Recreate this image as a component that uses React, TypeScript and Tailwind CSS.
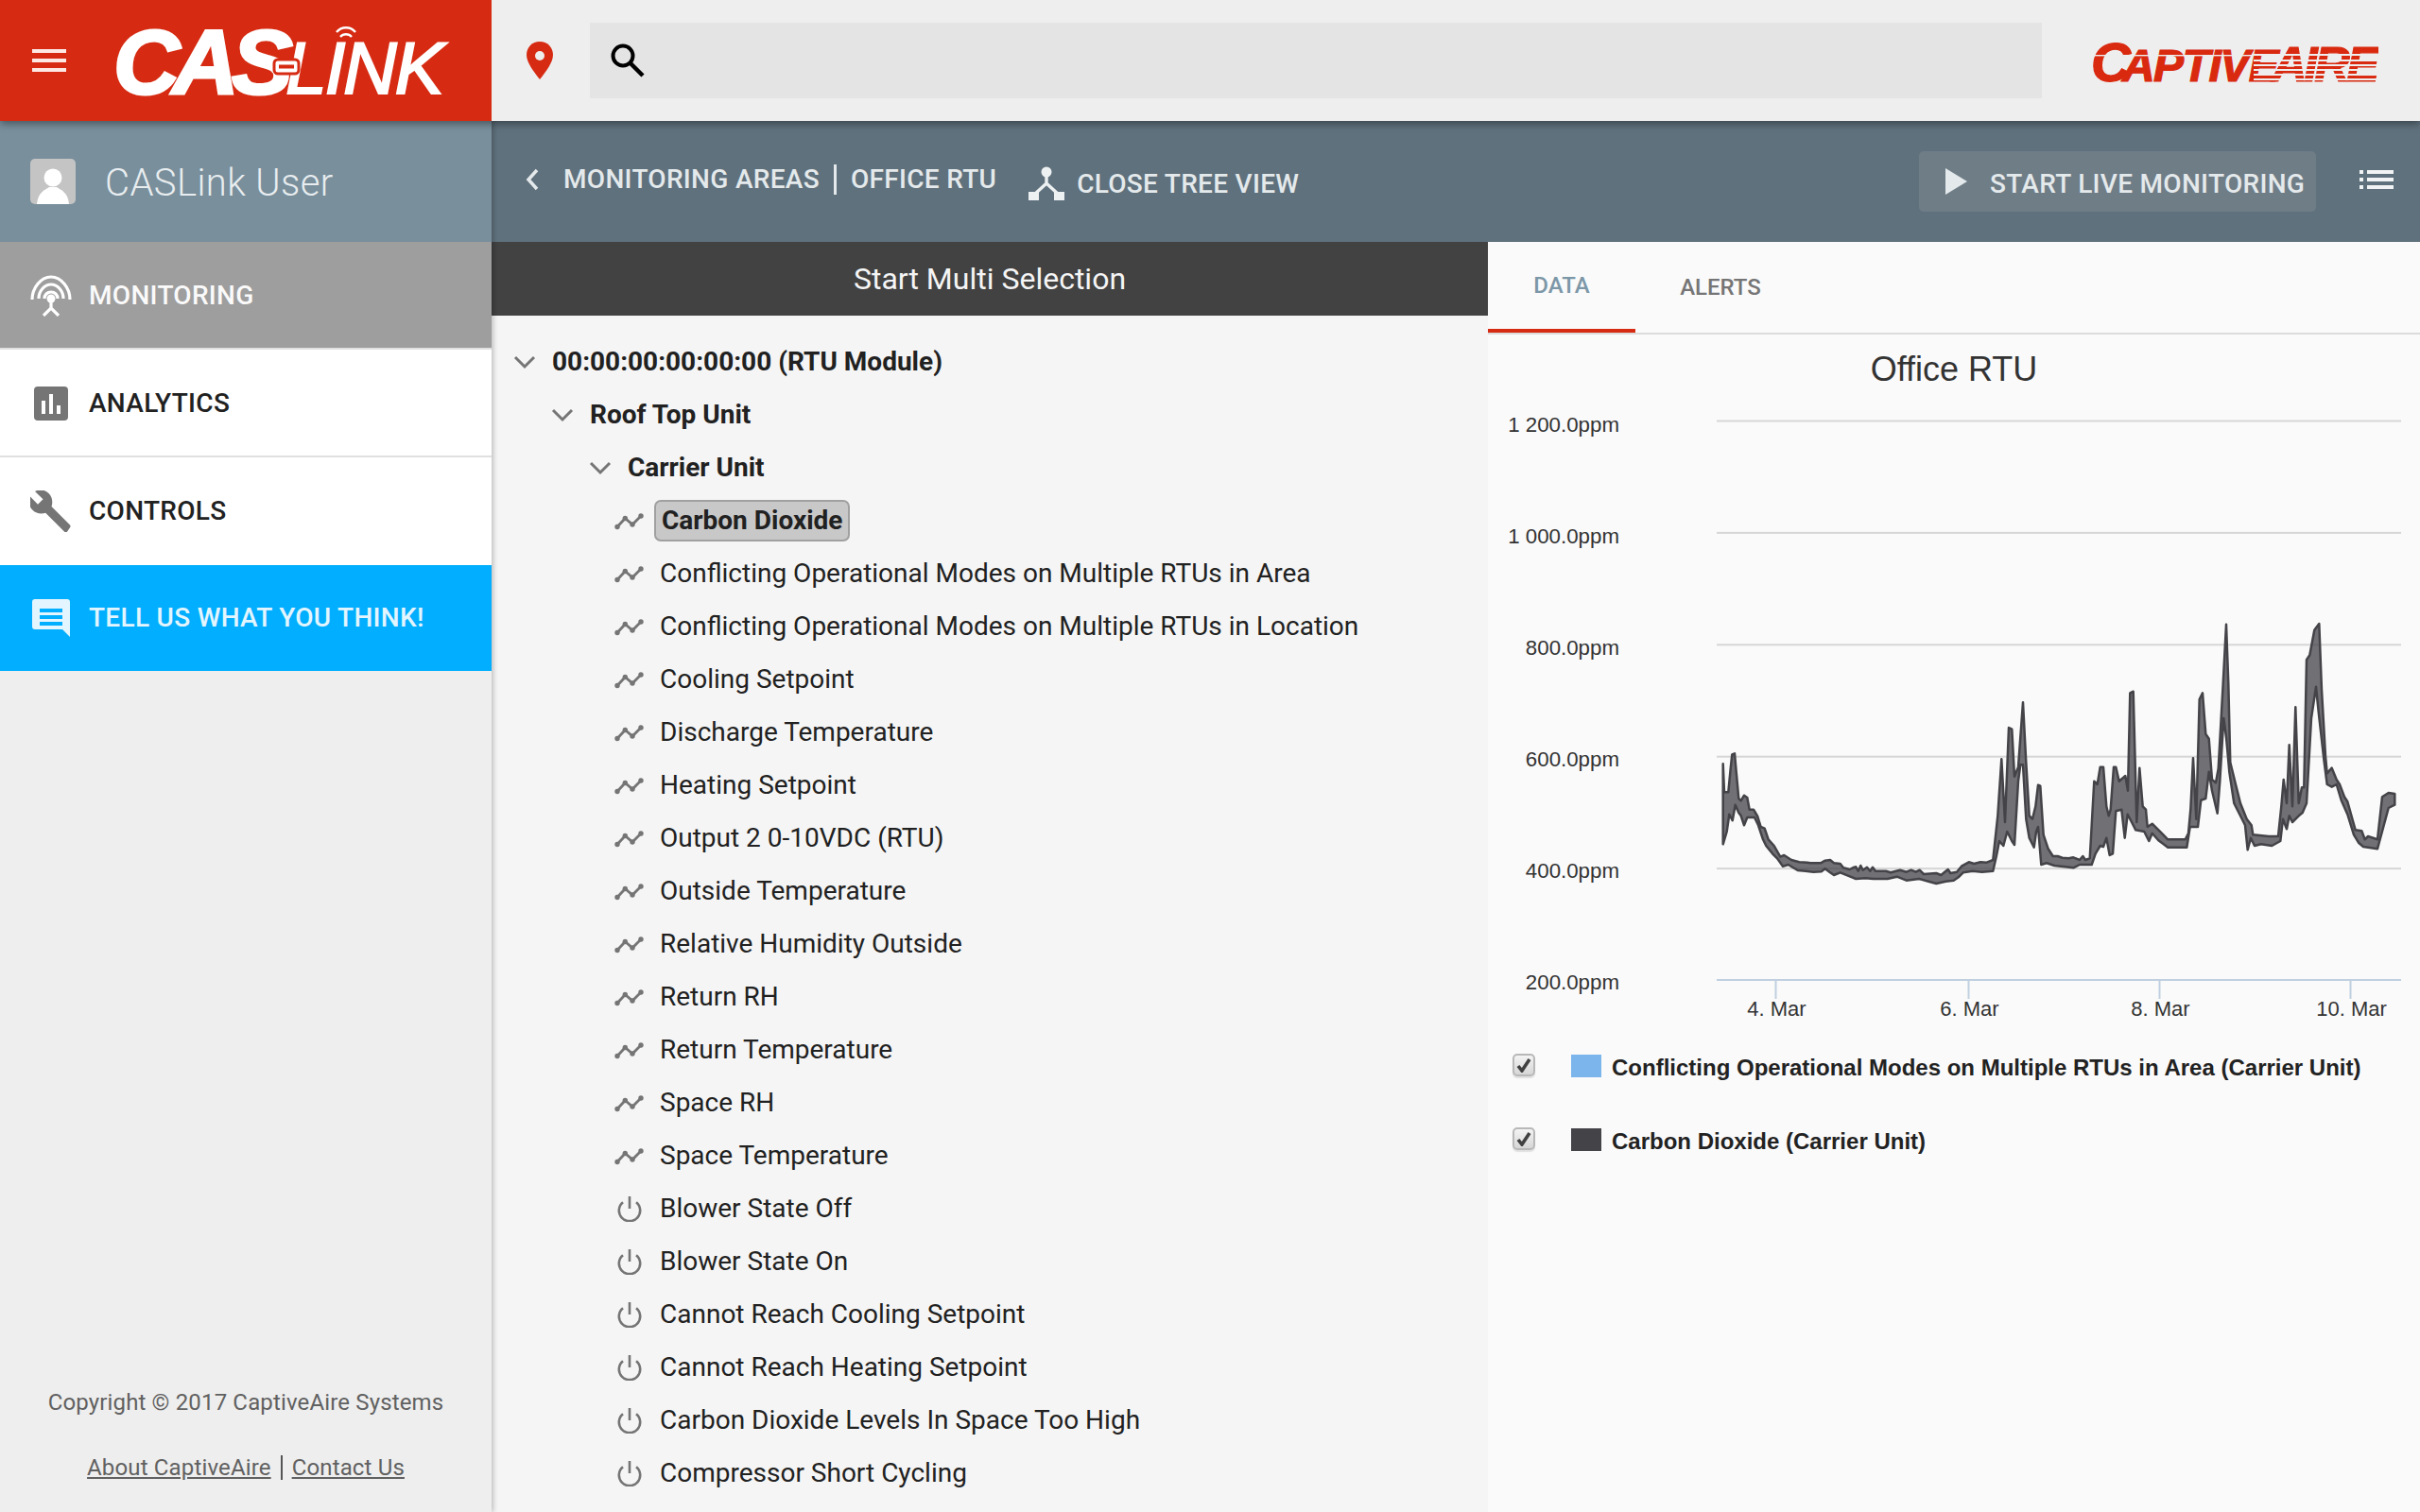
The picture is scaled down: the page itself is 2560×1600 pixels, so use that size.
import React from "react";

const roboto = "font-['Roboto',sans-serif]";

const U8: [number, number][] = [[68,205],[72,295],[85,295],[92,220],[97,175],[105,172],[110,230],[118,315],[125,322],[135,305],[145,312],[152,350],[165,350],[178,372],[188,405],[200,410],[212,445],[230,465],[250,500],[262,495],[285,510],[310,517],[335,518],[345,520],[378,520],[392,512],[408,510],[420,520],[440,522],[450,535],[470,540],[480,535],[490,532],[497,545],[505,528],[512,542],[525,533],[535,545],[543,533],[552,545],[585,545],[600,550],[630,542],[650,548],[665,542],[680,548],[692,542],[705,555],[745,552],[760,558],[782,540],[790,552],[810,548],[825,530],[848,517],[865,522],[885,517],[905,518],[925,510],[940,370],[952,190],[963,390],[975,90],[985,95],[993,245],[1005,215],[1020,10],[1030,200],[1040,370],[1050,380],[1060,340],[1068,272],[1075,275],[1085,430],[1100,475],[1115,498],[1130,498],[1145,503],[1165,505],[1180,502],[1200,510]];
const L8: [number, number][] = [[68,460],[80,420],[88,365],[98,385],[107,335],[118,360],[125,370],[135,400],[145,375],[168,375],[180,400],[195,445],[205,465],[225,490],[240,505],[258,530],[275,525],[305,543],[330,545],[355,548],[380,547],[392,538],[408,550],[420,558],[440,550],[470,562],[490,570],[520,568],[545,570],[590,570],[620,563],[650,575],[690,570],[720,578],[745,585],[775,578],[800,575],[815,565],[830,550],[860,545],[890,548],[925,545],[935,500],[945,450],[958,465],[970,420],[985,450],[993,462],[1005,260],[1012,208],[1020,208],[1030,380],[1040,440],[1055,470],[1062,420],[1068,405],[1078,525],[1095,520],[1120,528],[1140,530],[1155,532],[1180,535],[1200,525]];
const U9: [number, number][] = [[10,798],[18,810],[32,805],[38,700],[46,560],[56,570],[65,515],[75,515],[85,640],[92,670],[98,650],[108,515],[115,515],[125,560],[145,543],[153,590],[160,280],[170,275],[181,690],[190,518],[200,640],[210,650],[215,705],[230,695],[260,725],[280,745],[335,745],[345,725],[352,650],[360,487],[370,680],[380,300],[390,280],[400,410],[410,425],[420,555],[432,565],[440,520],[455,250],[465,62],[472,250],[478,500],[495,570],[510,630],[530,680],[545,700],[550,730],[600,735],[630,735],[640,640],[647,555],[657,630],[665,445],[675,640],[685,325],[695,630],[705,580],[712,580],[720,175],[730,160],[745,80],[760,60],[768,270],[780,480],[785,535],[800,518],[815,555],[825,570],[840,610],[850,625],[875,715],[895,718],[905,745],[915,735],[945,745],[960,610],[980,597],[1000,600]];
const L9: [number, number][] = [[38,825],[50,790],[65,765],[75,768],[85,740],[95,795],[105,790],[115,655],[133,650],[143,740],[152,665],[165,690],[178,715],[205,720],[220,750],[230,725],[250,748],[280,770],[340,770],[350,705],[375,705],[385,620],[400,615],[410,530],[420,590],[437,662],[445,560],[457,360],[465,420],[475,530],[490,630],[510,670],[525,700],[533,778],[543,740],[555,765],[575,760],[610,765],[637,750],[645,680],[657,712],[665,670],[675,690],[695,670],[707,660],[720,630],[735,360],[750,260],[758,340],[775,490],[785,570],[800,578],[815,570],[830,620],[850,665],[870,730],[885,755],[900,768],[945,775],[965,700],[980,645],[1000,635]];

// chart svg origin is (1574, 354) in page space
const OX = 1574;
const OY = 354;
const m8 = (p: [number, number]) => `${(1800 + p[0] / 3 - OX).toFixed(1)},${(740 + p[1] / 3 - OY).toFixed(1)}`;
const m9 = (p: [number, number]) => `${(2200 + p[0] / 3 - OX).toFixed(1)},${(640 + p[1] / 3 - OY).toFixed(1)}`;
const upper = [...U8.map(m8), ...U9.map(m9)];
const lower = [...L8.map(m8), ...L9.map(m9)];
const area = [...upper, ...[...lower].reverse()].join(" ");

const trendItems = [
  "Conflicting Operational Modes on Multiple RTUs in Area",
  "Conflicting Operational Modes on Multiple RTUs in Location",
  "Cooling Setpoint",
  "Discharge Temperature",
  "Heating Setpoint",
  "Output 2 0-10VDC (RTU)",
  "Outside Temperature",
  "Relative Humidity Outside",
  "Return RH",
  "Return Temperature",
  "Space RH",
  "Space Temperature",
];
const powerItems = [
  "Blower State Off",
  "Blower State On",
  "Cannot Reach Cooling Setpoint",
  "Cannot Reach Heating Setpoint",
  "Carbon Dioxide Levels In Space Too High",
  "Compressor Short Cycling",
];

function Chevron() {
  return (
    <svg width="24" height="16" viewBox="0 0 24 16" className="shrink-0">
      <path d="M2 3l10 10L22 3" fill="none" stroke="#757575" strokeWidth="3" />
    </svg>
  );
}
function TrendIcon() {
  return (
    <svg width="32" height="20" viewBox="0 0 32 20" className="shrink-0 mt-[2px]">
      <path d="M3 15.500l8.300-9L19 13l9-9" fill="none" stroke="#757575" strokeWidth="2.800" />
      <circle cx="3" cy="15.500" r="2.700" fill="#757575" />
      <circle cx="11.300" cy="6.500" r="2.700" fill="#757575" />
      <circle cx="19" cy="13" r="2.700" fill="#757575" />
      <circle cx="28" cy="4" r="2.700" fill="#757575" />
    </svg>
  );
}
function PowerIcon() {
  return (
    <svg width="32" height="28" viewBox="0 0 32 28" className="shrink-0">
      <path d="M9 7.200a11.200 11.200 0 1 0 14 0" fill="none" stroke="#757575" strokeWidth="2.600" />
      <path d="M16 1v13" fill="none" stroke="#757575" strokeWidth="2.600" />
    </svg>
  );
}
function Branch({ indent, label }: { indent: string; label: string }) {
  return (
    <div className={`flex h-[56px] items-center ${indent}`}>
      <Chevron />
      <span className="ml-[17px] text-[28px] font-bold text-[#212121]">{label}</span>
    </div>
  );
}
function Leaf({ icon, children }: { icon: React.ReactNode; children: React.ReactNode }) {
  return (
    <div className="flex h-[56px] items-center pl-[130px]">
      <span className="flex w-[48px] shrink-0 items-center">{icon}</span>
      {children}
    </div>
  );
}

function CasLinkLogo() {
  return (
    <svg width="360" height="100" viewBox="0 0 360 100" className="ml-[34px] shrink-0">
      <text x="0" y="86" fill="#fff" stroke="#fff" fontFamily="'Liberation Sans', sans-serif" fontStyle="italic">
        <tspan fontSize="97" fontWeight="700" letterSpacing="-7.500" strokeWidth="3">CAS</tspan>
        <tspan fontSize="78" fontWeight="400" letterSpacing="-2" strokeWidth="2.200">LINK</tspan>
      </text>
      <rect x="170" y="50" width="26" height="15" rx="4" fill="#fff" stroke="#d62b12" strokeWidth="3" />
      <rect x="175" y="55.500" width="16" height="4" fill="#d62b12" />
      <path d="M236 21a13 13 0 0 1 20 0" fill="none" stroke="#fff" strokeWidth="2.400" />
      <path d="M240 26a8 8 0 0 1 12 0" fill="none" stroke="#fff" strokeWidth="2.400" />
    </svg>
  );
}

function CaptiveLogo() {
  const stripes = [17, 23, 28, 33, 38, 43];
  return (
    <svg width="304" height="50" viewBox="0 0 304 50" className="shrink-0">
      <text x="0" y="46" fill="#d9290f" stroke="#d9290f" strokeWidth="1.200" fontFamily="'Liberation Sans', sans-serif" fontStyle="italic" fontWeight="700">
        <tspan fontSize="58" letterSpacing="-9">C</tspan>
        <tspan fontSize="48" letterSpacing="-1.500">APTIVE</tspan>
        <tspan fontSize="52" letterSpacing="-3.500" dx="-6">AIRE</tspan>
      </text>
      <rect x="0" y="18" width="170" height="1.400" fill="#eee" />
      {stripes.map((y) => (
        <rect key={y} x="172" y={y} width="132" height="2" fill="#eee" />
      ))}
    </svg>
  );
}

function NavRow({ icon, label, cls }: { icon: React.ReactNode; label: string; cls: string }) {
  return (
    <div className={`flex items-center pl-[32px] text-[28px] font-medium tracking-[0.3px] ${cls}`}>
      <span className="flex w-[62px] shrink-0 items-center">{icon}</span>
      <span>{label}</span>
    </div>
  );
}

function Legend({ color, label }: { color: string; label: string }) {
  return (
    <div className="flex h-[78px] items-center pl-[26px]">
      <span className="mb-[6px] flex h-[24px] w-[24px] shrink-0 items-center justify-center rounded-[5px] border-2 border-[#b8b8b8] bg-gradient-to-b from-[#f4f4f4] to-[#d6d6d6] shadow-[0_2px_1px_#e0e0e0]">
        <svg width="16" height="16" viewBox="0 0 16 16"><path d="M2 9l4 5L14 2" fill="none" stroke="#404040" strokeWidth="3.600" /></svg>
      </span>
      <span className="mb-[4px] ml-[38px] h-[24px] w-[32px] shrink-0" style={{ backgroundColor: color }} />
      <span className="ml-[11px] font-['Liberation_Sans',sans-serif] text-[24px] font-bold text-[#222]">{label}</span>
    </div>
  );
}

export default function App() {
  const yLabels = ["1 200.0ppm", "1 000.0ppm", "800.0ppm", "600.0ppm", "400.0ppm", "200.0ppm"];
  const ticks: [number, string][] = [[1878.5, "4. Mar"], [2082.5, "6. Mar"], [2284.5, "8. Mar"], [2486.5, "10. Mar"]];
  return (
    <div className={`flex h-[1600px] w-[2560px] flex-col overflow-hidden bg-[#eeeeee] ${roboto}`}>
      <header className="relative z-20 flex h-[128px] shrink-0 items-center bg-[#eeeeee] shadow-[0_3px_8px_rgba(0,0,0,0.4)]">
        <div className="flex h-full w-[520px] shrink-0 items-center bg-[#d62b12] pl-[34px]">
          <svg width="36" height="24" viewBox="0 0 36 24" className="shrink-0">
            <path d="M0 0h36v4H0zM0 10h36v4H0zM0 20h36v4H0z" fill="#fde8e4" />
          </svg>
          <div className="ml-[16px] mt-[-2px]"><CasLinkLogo /></div>
        </div>
        <svg width="28" height="40" viewBox="0 0 28 40" className="ml-[37px] mt-[-1px] shrink-0">
          <path d="M14 0C6 0 0 6.200 0 14c0 8 7 17 14 26 7-9 14-18 14-26C28 6.200 22 0 14 0z" fill="#d62b12" />
          <circle cx="14" cy="15" r="5" fill="#eee" />
        </svg>
        <div className="ml-[39px] flex h-[80px] w-[1536px] shrink-0 items-center bg-[#e4e4e4] pl-[22px]">
          <svg width="36" height="36" viewBox="0 0 36 36">
            <circle cx="13" cy="13" r="10.500" fill="none" stroke="#000" strokeWidth="4" />
            <path d="M21 21l13 13" stroke="#000" strokeWidth="4.500" fill="none" />
          </svg>
        </div>
        <div className="ml-[52px] mt-[2px]"><CaptiveLogo /></div>
      </header>

      <div className="flex min-h-0 flex-1">
        <aside className="relative z-10 flex w-[520px] shrink-0 flex-col bg-[#eeeeee] shadow-[2px_0_5px_rgba(0,0,0,0.22)]">
          <div className="flex h-[128px] items-center bg-[#798f9c] pl-[32px]">
            <div className="flex h-[48px] w-[48px] items-end justify-center overflow-hidden rounded-[5px] bg-[#c4c4c4]">
              <svg width="40" height="42" viewBox="0 0 40 42">
                <circle cx="20" cy="14" r="9.500" fill="#fff" />
                <path d="M3 42c1-12 8-15 13-18h8c5 3 12 6 13 18z" fill="#fff" />
              </svg>
            </div>
            <span className="ml-[31px] mt-[4px] text-[40px] font-light leading-none tracking-[0.4px] text-[#e8edef]">CASLink User</span>
          </div>
          <NavRow
            cls="h-[114px] pt-[2px] border-b-2 border-[#e0e0e0] bg-[#9e9e9e] text-[#fafafa]"
            label="MONITORING"
            icon={
              <svg width="44" height="44" viewBox="0 0 44 44">
                <g fill="none" stroke="#fff" strokeWidth="3.200">
                  <path d="M2 26C2 14 11 2 22 2s20 12 20 24" />
                  <path d="M9 25c0-8 6-15 13-15s13 7 13 15" />
                  <path d="M15 25c0-4 3-7 7-7s7 3 7 7" />
                  <path d="M22 28v7M14 43l8-8 8 8" />
                </g>
                <circle cx="22" cy="25" r="4.500" fill="#fff" />
              </svg>
            }
          />
          <NavRow
            cls="h-[114px] pt-[2px] border-b-2 border-[#e0e0e0] bg-white text-[#212121]"
            label="ANALYTICS"
            icon={
              <svg width="36" height="36" viewBox="0 0 36 36" className="ml-[4px]">
                <rect width="36" height="36" rx="4" fill="#757575" />
                <path d="M8 15h4v14H8zM16 8h4v21h-4zM24 20h4v9h-4z" fill="#fff" />
              </svg>
            }
          />
          <NavRow
            cls="h-[114px] bg-white text-[#212121]"
            label="CONTROLS"
            icon={
              <svg width="44" height="44" viewBox="0 0 44 44">
                <path d="M42 36.500 22.500 17c1.700-4.700.7-10.300-3-14C15.500-1 9.500-1.700 5 1l8.500 8.300-5.500 5.500L0 6.500c-2.300 4.500-1.500 10.500 2.500 14.300 3.700 3.700 9 4.700 13.700 3L36.500 44c.8.600 1.600.600 2.300 0l3.200-4.700c.7-.7.700-2 0-2.800z" fill="#757575" />
              </svg>
            }
          />
          <NavRow
            cls="h-[112px] bg-[#02aeff] text-[#e3f5fe]"
            label="TELL US WHAT YOU THINK!"
            icon={
              <svg width="40" height="40" viewBox="0 0 40 40" className="ml-[2px]">
                <path d="M3 0h34a3 3 0 0 1 3 3v37l-8-8H3a3 3 0 0 1-3-3V3a3 3 0 0 1 3-3z" fill="#e3f5fe" />
                <path d="M8 10h24v4H8zM8 17h24v4H8zM8 24h24v4H8z" fill="#02aeff" />
              </svg>
            }
          />
          <div className="mt-auto flex flex-col items-center pb-[29px] text-[24px] tracking-[0.15px] text-[#616161]">
            <span>Copyright © 2017 CaptiveAire Systems</span>
            <div className="mt-[33px] flex items-center">
              <span className="underline">About CaptiveAire</span>
              <span className="mx-[10px] h-[26px] w-[2px] bg-[#555]" />
              <span className="underline">Contact Us</span>
            </div>
          </div>
        </aside>

        <main className="flex min-w-0 flex-1 flex-col">
          <div className="flex h-[128px] shrink-0 items-center bg-[#5f717d] text-[#e4e9eb]">
            <svg width="14" height="24" viewBox="0 0 14 24" className="ml-[36px] mt-[-4px] shrink-0">
              <path d="M12 2 3 12l9 10" fill="none" stroke="#e4e9eb" strokeWidth="3.500" />
            </svg>
            <div className="ml-[26px] mt-[-5px] flex items-center text-[28px] font-medium tracking-[0.3px]">
              <span>MONITORING AREAS</span>
              <span className="mx-[15px] h-[32px] w-[3px] bg-[#e4e9eb]" />
              <span>OFFICE RTU</span>
            </div>
            <svg width="38" height="36" viewBox="0 0 38 36" className="ml-[34px] mt-[4px] shrink-0">
              <circle cx="19" cy="6" r="5.500" fill="#eef1f2" />
              <path d="M19 8v10M19 18 6 30M19 18l13 12" stroke="#eef1f2" strokeWidth="3.400" fill="none" />
              <path d="M0 27h11v9H0zM27 27h11v9H27z" fill="#eef1f2" />
            </svg>
            <span className="ml-[13px] mt-[5px] text-[28px] font-medium tracking-[0.3px]">CLOSE TREE VIEW</span>
            <div className="ml-auto flex h-[64px] w-[420px] items-center rounded-[5px] bg-[#6f7d87] pl-[27px]">
              <svg width="24" height="28" viewBox="0 0 24 28" className="shrink-0">
                <path d="M1 0l23 14L1 28z" fill="#e4e9eb" />
              </svg>
              <span className="ml-[24px] mt-[5px] text-[28px] font-medium tracking-[0.3px]">START LIVE MONITORING</span>
            </div>
            <svg width="36" height="20" viewBox="0 0 36 20" className="ml-[46px] mr-[28px] mt-[-4px] shrink-0">
              <path d="M0 0h4v4H0zM8 0h28v4H8zM0 8h4v4H0zM8 8h28v4H8zM0 16h4v4H0zM8 16h28v4H8z" fill="#f1f3f4" />
            </svg>
          </div>

          <div className="flex min-h-0 flex-1">
            <section className="flex w-[1054px] shrink-0 flex-col overflow-hidden bg-[#f5f5f5]">
              <div className="flex h-[78px] shrink-0 items-center justify-center bg-[#424242] text-[32px] text-[#f5f5f5]">
                Start Multi Selection
              </div>
              <div className="pt-[21px] text-[#212121]">
                <Branch indent="pl-[23px]" label="00:00:00:00:00:00 (RTU Module)" />
                <Branch indent="pl-[63px]" label="Roof Top Unit" />
                <Branch indent="pl-[103px]" label="Carrier Unit" />
                <Leaf icon={<TrendIcon />}>
                  <span className="ml-[-6px] flex h-[44px] items-center rounded-[7px] border-2 border-[#a0a0a0] bg-[#c8c8c8] px-[6px] text-[28px] font-bold">Carbon Dioxide</span>
                </Leaf>
                {trendItems.map((t) => (
                  <Leaf key={t} icon={<TrendIcon />}>
                    <span className="text-[28px]">{t}</span>
                  </Leaf>
                ))}
                {powerItems.map((t) => (
                  <Leaf key={t} icon={<PowerIcon />}>
                    <span className="text-[28px]">{t}</span>
                  </Leaf>
                ))}
              </div>
            </section>

            <section className="flex min-w-0 flex-1 flex-col bg-[#fafafa]">
              <div className="flex h-[98px] shrink-0 border-b-2 border-[#dcdcdc] text-[24px] font-medium">
                <div className="flex h-[96px] w-[156px] items-center justify-center border-b-4 border-[#d62b12] text-[#7c97a7]">DATA</div>
                <div className="flex h-[96px] w-[180px] items-center justify-center text-[#757575]">ALERTS</div>
              </div>
              <svg width="986" height="737" viewBox="0 0 986 737" className="shrink-0">
                <g fontFamily="'Liberation Sans', sans-serif">
                  <text x="493" y="49" textAnchor="middle" fontSize="36" fill="#333">Office RTU</text>
                  {yLabels.map((l, i) => (
                    <g key={l}>
                      <text x="139" y={102.5 + i * 118.1} textAnchor="end" fontSize="22.300" fill="#333">{l}</text>
                      {i < 5 && <rect x="242" y={90.5 + i * 118.4} width="724" height="2" fill="#d6d6d6" />}
                    </g>
                  ))}
                  <rect x="242" y="682" width="724" height="2" fill="#c0d0e0" />
                  {ticks.map(([x, l]) => (
                    <g key={l}>
                      <rect x={x - OX - 1} y="683" width="2" height="20" fill="#c0d0e0" />
                      <text x={x - OX + 1} y="721" textAnchor="middle" fontSize="22" fill="#333">{l}</text>
                    </g>
                  ))}
                </g>
                <polygon points={area} fill="#434348" fillOpacity="0.75" stroke="#434348" strokeWidth="2.500" strokeLinejoin="round" />
              </svg>
              <div className="flex flex-col">
                <Legend color="#7cb5ec" label="Conflicting Operational Modes on Multiple RTUs in Area (Carrier Unit)" />
                <Legend color="#434348" label="Carbon Dioxide (Carrier Unit)" />
              </div>
            </section>
          </div>
        </main>
      </div>
    </div>
  );
}
